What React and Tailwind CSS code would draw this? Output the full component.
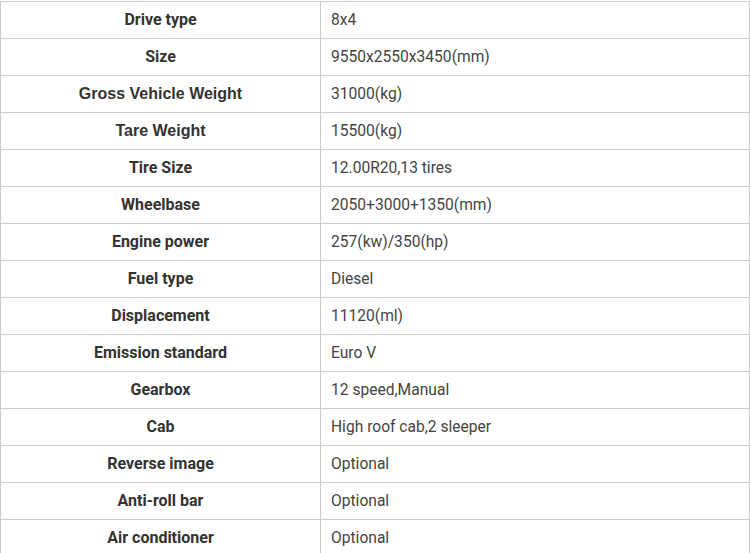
import React from "react";

const rows = [
  ["Drive type", "8x4"],
  ["Size", "9550x2550x3450(mm)"],
  ["Gross Vehicle Weight", "31000(kg)", true],
  ["Tare Weight", "15500(kg)", true],
  ["Tire Size", "12.00R20,13 tires"],
  ["Wheelbase", "2050+3000+1350(mm)"],
  ["Engine power", "257(kw)/350(hp)"],
  ["Fuel type", "Diesel"],
  ["Displacement", "11120(ml)"],
  ["Emission standard", "Euro V"],
  ["Gearbox", "12 speed,Manual"],
  ["Cab", "High roof cab,2 sleeper"],
  ["Reverse image", "Optional"],
  ["Anti-roll bar", "Optional"],
  ["Air conditioner", "Optional"],
];

export default function App() {
  return (
    <div className="w-[750px] h-[553px] overflow-hidden bg-white pt-px" style={{ fontFamily: "Roboto, 'Liberation Sans', sans-serif" }}>
      <table className="w-[750px] border-collapse text-[#333]">
        <tbody>
          {rows.map(([k, v, arial]) => (
            <tr key={k} className="h-[37px]">
              <td
                className={
                  arial
                    ? "w-[320px] border border-[#cccccc] text-center font-bold text-[16px] p-0 font-['Liberation_Sans',Arial,sans-serif]"
                    : "w-[320px] border border-[#cccccc] text-center font-bold text-[16px] p-0"
                }
              >
                {k}
              </td>
              <td className="border border-[#cccccc] p-0 pl-[10px] pt-[2px] text-[15.6px] text-[#444]">{v}</td>
            </tr>
          ))}
        </tbody>
      </table>
    </div>
  );
}
